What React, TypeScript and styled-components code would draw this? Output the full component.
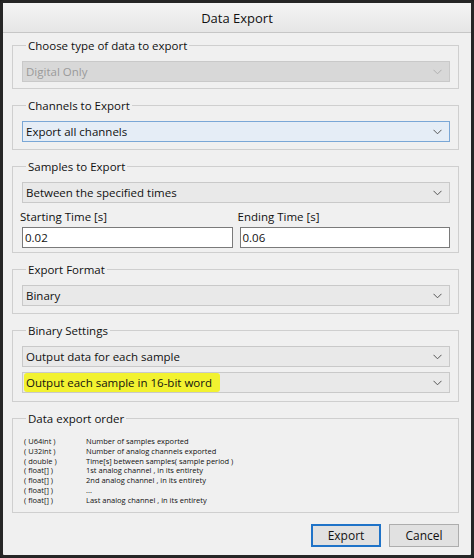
import { Fragment } from 'react';
import styled, { createGlobalStyle } from 'styled-components';

const Global = createGlobalStyle`
  html, body { margin: 0; padding: 0; background: #1e1e1e; }
  body { font-family: "Open Sans", "Noto Sans", "Liberation Sans", sans-serif; font-size: 11px; color: #111; }
`;

const Window = styled.div`
  width: 474px;
  height: 558px;
  box-sizing: border-box;
  border: 3px solid #262626;
  border-radius: 4px;
  background: #f0f0f0;
  display: flex;
  flex-direction: column;
`;

const TitleBar = styled.div`
  height: 29px;
  display: flex;
  align-items: center;
  justify-content: center;
  font-size: 13px;
  background: linear-gradient(#f4f4f4, #e6e6e6);
  border-bottom: 1px solid #c6c6c6;
`;

const Body = styled.div`
  flex: 1;
  padding: 5px 12px 0 9px;
  display: flex;
  flex-direction: column;
`;

const Group = styled.fieldset<{ $h: number }>`
  margin: 0 0 9px 0;
  padding: 8px 8px 0 9px;
  height: ${p => p.$h}px;
  box-sizing: border-box;
  border: 1px solid #cfcfcf;
  display: flex;
  flex-direction: column;
  gap: 5px;
  legend {
    padding: 0 2px;
    margin-left: 4px;
    font-size: 11.5px;
  }
`;

const SelectBox = styled.div<{ $disabled?: boolean; $focus?: boolean }>`
  height: 19px;
  display: flex;
  align-items: center;
  justify-content: space-between;
  padding: 0 7px 0 3px;
  font-size: 11.5px;
  border: 1px solid ${p => (p.$focus ? '#7aa7d6' : '#c9c9c9')};
  background: ${p => (p.$disabled ? '#d8d8d8' : p.$focus ? '#e5edf6' : '#e9e9e9')};
  color: ${p => (p.$disabled ? '#9a9a9a' : '#111')};
`;

const Highlight = styled.span`
  background: #f2f230;
  margin-left: -2px;
  padding: 2px 8px 2px 2px;
  border-radius: 3px;
`;

const Chevron = ({ c = '#555' }: { c?: string }) => (
  <svg width="9" height="6" viewBox="0 0 9 6">
    <path d="M0.5 0.8 L4.5 4.8 L8.5 0.8" fill="none" stroke={c} strokeWidth="1" />
  </svg>
);

const TimeRow = styled.div`
  display: grid;
  grid-template-columns: 1fr 1fr;
  gap: 5px;
  margin-left: -2px;
  margin-top: 1px;
`;

const TimeLabel = styled.div`
  font-size: 11.5px;
  margin-bottom: 3px;
`;

const Input = styled.div`
  height: 19px;
  border: 1px solid #7a7a7a;
  background: #fff;
  display: flex;
  align-items: center;
  padding-left: 2px;
  font-size: 11.5px;
  margin-left: 2px;
`;

const OrderTable = styled.div`
  display: grid;
  grid-template-columns: 62px 1fr;
  font-size: 7.5px;
  line-height: 9.8px;
  margin: 3px 0 0 2px;
`;

const Footer = styled.div`
  display: flex;
  justify-content: flex-end;
  gap: 8px;
  padding: 2px 0 0;
`;

const Button = styled.div<{ $primary?: boolean }>`
  width: 70px;
  height: 23px;
  display: flex;
  align-items: center;
  justify-content: center;
  font-size: 12px;
  background: #e1e1e1;
  border: ${p => (p.$primary ? '2px solid #1f73c8' : '1px solid #adadad')};
  box-sizing: border-box;
`;

const rows: [string, string][] = [
  ['( U64int )', 'Number of samples exported'],
  ['( U32int )', 'Number of analog channels exported'],
  ['( double )', 'Time[s] between samples( sample period )'],
  ['( float[] )', '1st analog channel , in its entirety'],
  ['( float[] )', '2nd analog channel , in its entirety'],
  ['( float[] )', '...'],
  ['( float[] )', 'Last analog channel , in its entirety'],
];

export default function App() {
  return (
    <>
      <Global />
      <Window>
        <TitleBar>Data Export</TitleBar>
        <Body>
          <Group $h={51}>
            <legend>Choose type of data to export</legend>
            <SelectBox $disabled>Digital Only<Chevron c="#b0b0b0" /></SelectBox>
          </Group>
          <Group $h={52}>
            <legend>Channels to Export</legend>
            <SelectBox $focus>Export all channels<Chevron /></SelectBox>
          </Group>
          <Group $h={94}>
            <legend>Samples to Export</legend>
            <SelectBox>Between the specified times<Chevron /></SelectBox>
            <TimeRow>
              <div>
                <TimeLabel>Starting Time [s]</TimeLabel>
                <Input>0.02</Input>
              </div>
              <div>
                <TimeLabel>Ending Time [s]</TimeLabel>
                <Input>0.06</Input>
              </div>
            </TimeRow>
          </Group>
          <Group $h={52}>
            <legend>Export Format</legend>
            <SelectBox>Binary<Chevron /></SelectBox>
          </Group>
          <Group $h={79}>
            <legend>Binary Settings</legend>
            <SelectBox>Output data for each sample<Chevron /></SelectBox>
            <SelectBox><Highlight>Output each sample in 16-bit word</Highlight><Chevron /></SelectBox>
          </Group>
          <Group $h={102}>
            <legend>Data export order</legend>
            <OrderTable>
              {rows.map(([a, b], i) => (
                <Fragment key={i}>
                  <div>{a}</div>
                  <div>{b}</div>
                </Fragment>
              ))}
            </OrderTable>
          </Group>
          <Footer>
            <Button $primary>Export</Button>
            <Button>Cancel</Button>
          </Footer>
        </Body>
      </Window>
    </>
  );
}
